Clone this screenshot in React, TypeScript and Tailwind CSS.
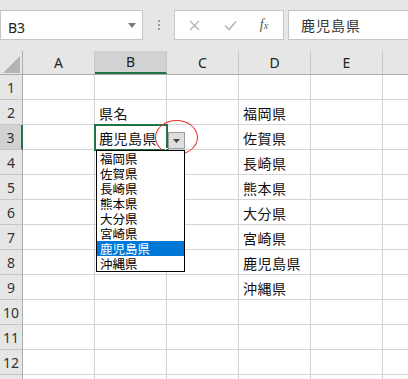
import React from 'react';

const cols = ['A', 'B', 'C', 'D', 'E', 'F'];

// cell values by row number
const data: Record<number, { B?: string; D?: string }> = {
  2: { B: '県名', D: '福岡県' },
  3: { B: '鹿児島県', D: '佐賀県' },
  4: { D: '長崎県' },
  5: { D: '熊本県' },
  6: { D: '大分県' },
  7: { D: '宮崎県' },
  8: { D: '鹿児島県' },
  9: { D: '沖縄県' },
};

const options = ['福岡県', '佐賀県', '長崎県', '熊本県', '大分県', '宮崎県', '鹿児島県', '沖縄県'];

const jp = "font-['Noto_Sans_CJK_JP',sans-serif]";
const ui = "font-['Noto_Sans','Noto_Sans_CJK_JP',sans-serif]";

function FormulaBar() {
  return (
    <div className="h-[51px] bg-[#e6e6e6] flex items-start pt-[10px]">
      <div className="w-[143px] h-[30px] bg-white border border-[#c6c6c6] flex items-center justify-between pl-[7px] pr-[6px]">
        <span className={`${ui} text-[14px] text-[#222] mt-[4px]`}>B3</span>
        <svg width="8" height="5" viewBox="0 0 8 5">
          <path d="M0 0 L8 0 L4 5 Z" fill="#7a7a7a" />
        </svg>
      </div>
      <div className="w-[31px] h-[30px] flex flex-col items-center justify-center gap-[2px]">
        <span className="w-[2px] h-[2px] bg-[#9a9a9a]" />
        <span className="w-[2px] h-[2px] bg-[#9a9a9a]" />
        <span className="w-[2px] h-[2px] bg-[#9a9a9a]" />
      </div>
      <div className="w-[110px] h-[30px] bg-white border border-[#c6c6c6] flex items-center">
        <div className="w-[38px] flex justify-center">
          <svg width="11" height="11" viewBox="0 0 11 11">
            <path d="M1 1 L10 10 M10 1 L1 10" stroke="#b4b4b4" strokeWidth="1.4" />
          </svg>
        </div>
        <div className="w-[34px] flex justify-center">
          <svg width="13" height="11" viewBox="0 0 13 11">
            <path d="M1 5.5 L5 9.5 L12 1.5" stroke="#b4b4b4" strokeWidth="1.6" fill="none" />
          </svg>
        </div>
        <div className="w-[34px] flex justify-center">
          <span className="font-['Liberation_Serif',serif] italic text-[14px] text-[#555] leading-none">
            f<span className="text-[10px]">x</span>
          </span>
        </div>
      </div>
      <div className="flex-1 h-[30px] ml-[4px] bg-white border border-r-0 border-[#c6c6c6] flex items-center pl-[12px]">
        <span className={`${jp} text-[14px] tracking-[1px] text-[#333]`}>鹿児島県</span>
      </div>
    </div>
  );
}

function HeaderRow() {
  return (
    <div className="h-[24px] flex bg-[#e6e6e6] border-b border-[#ababab]">
      <div className="w-[23px] shrink-0 relative border-r border-[#ababab]">
        <svg className="absolute left-[3px] top-[5px]" width="17" height="17" viewBox="0 0 17 17">
          <path d="M17 0 L17 17 L0 17 Z" fill="#b4b4b4" />
        </svg>
      </div>
      {cols.map((c) => (
        <div
          key={c}
          className={`w-[72px] shrink-0 flex items-center justify-center border-r border-[#c6c6c6] text-[14px] ${ui} ${
            c === 'B' ? 'bg-[#d2d2d2] border-b-2 border-b-[#217346] text-[#222]' : 'text-[#222]'
          }`}
        >
          {c}
        </div>
      ))}
    </div>
  );
}

function Row({ n }: { n: number }) {
  const v = data[n] || {};
  const sel = n === 3;
  return (
    <div className="h-[25px] flex">
      <div
        className={`w-[23px] shrink-0 flex items-center justify-center text-[14px] text-[#333] ${ui} border-b border-[#c6c6c6] ${
          sel ? 'bg-[#d2d2d2] border-r-2 border-r-[#217346]' : 'bg-[#e6e6e6] border-r border-r-[#ababab]'
        }`}
      >
        {n}
      </div>
      {cols.map((c) => (
        <div
          key={c}
          className={`w-[72px] shrink-0 border-r border-b border-[#d4d4d4] flex items-center pl-[4px] pt-[2px] text-[14px] tracking-[0.5px] text-[#111] ${jp}`}
        >
          {c === 'B' ? v.B : c === 'D' ? v.D : null}
        </div>
      ))}
    </div>
  );
}

export default function App() {
  return (
    <div className="w-[408px] h-[379px] overflow-hidden bg-white relative">
      <FormulaBar />
      <HeaderRow />
      {[1, 2, 3, 4, 5, 6, 7, 8, 9, 10, 11, 12, 13].map((n) => (
        <Row key={n} n={n} />
      ))}

      {/* active cell B3 */}
      <div className="absolute left-[94px] top-[124px] w-[74px] h-[27px] border-2 border-[#217346] pointer-events-none" />
      <div className="absolute left-[165px] top-[148px] w-[5px] h-[5px] bg-[#217346] border border-white" />

      {/* in-cell dropdown button */}
      <div className="absolute left-[168px] top-[132px] w-[17px] h-[17px] bg-[#dedede] border border-[#9c9c9c] flex items-center justify-center">
        <svg width="7" height="4" viewBox="0 0 7 4">
          <path d="M0 0 L7 0 L3.5 4 Z" fill="#444" />
        </svg>
      </div>

      {/* red circle */}
      <div className="absolute left-[155px] top-[120px] w-[43px] h-[35px] rounded-[50%] border border-[#e8322e]" />

      {/* list */}
      <div className={`absolute left-[96px] top-[150px] w-[89px] bg-white border border-black py-0 ${jp}`}>
        {options.map((o) => (
          <div
            key={o}
            className={`h-[15px] leading-[15px] text-[12.5px] pl-[3px] ${
              o === '鹿児島県' ? 'bg-[#0078d7] text-white' : 'text-black'
            }`}
          >
            {o}
          </div>
        ))}
      </div>
    </div>
  );
}
